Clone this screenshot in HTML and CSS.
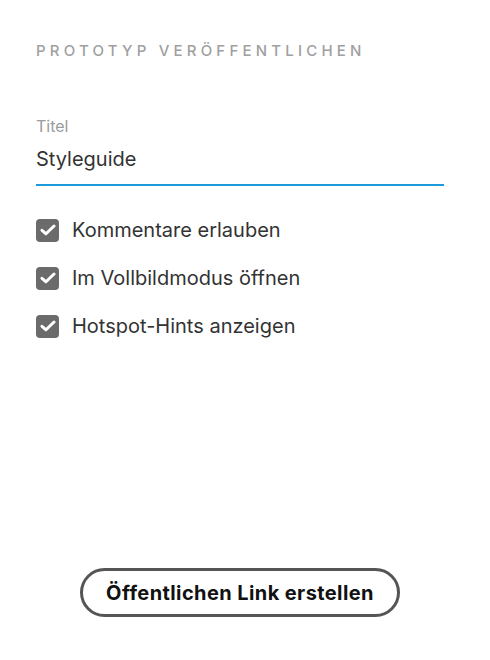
FILE: index.html
```html
<!DOCTYPE html>
<html>
<head>
  <title>Prototyp veröffentlichen</title>
  <link rel="stylesheet" href="styles.css">
</head>
<body>
  <div class="panel">
    <h2 class="panel-title">Prototyp veröffentlichen</h2>

    <div class="field">
      <label class="field-label" for="title">Titel</label>
      <div class="field-value" id="title">Styleguide</div>
    </div>

    <ul class="options">
      <li>
        <span class="check">
          <svg width="16" height="12" viewBox="0 0 16 12"><path d="M2 6.3 L6 9.8 L14 2" fill="none" stroke="#fff" stroke-width="3" stroke-linecap="round" stroke-linejoin="round"/></svg>
        </span>
        Kommentare erlauben
      </li>
      <li>
        <span class="check">
          <svg width="16" height="12" viewBox="0 0 16 12"><path d="M2 6.3 L6 9.8 L14 2" fill="none" stroke="#fff" stroke-width="3" stroke-linecap="round" stroke-linejoin="round"/></svg>
        </span>
        Im Vollbildmodus öffnen
      </li>
      <li>
        <span class="check">
          <svg width="16" height="12" viewBox="0 0 16 12"><path d="M2 6.3 L6 9.8 L14 2" fill="none" stroke="#fff" stroke-width="3" stroke-linecap="round" stroke-linejoin="round"/></svg>
        </span>
        Hotspot-Hints anzeigen
      </li>
    </ul>

    <div class="actions">
      <button class="publish-btn">Öffentlichen Link erstellen</button>
    </div>
  </div>
</body>
</html>
```

FILE: styles.css
```css
/* Global styles */
body {
  font-family: Inter, "Noto Sans", sans-serif;
  margin: 0;
  padding: 0;
  background: #fff;
  color: #333;
}

.panel {
  width: 490px;
  height: 660px;
  box-sizing: border-box;
  padding: 41px 46px 0 36px;
  display: flex;
  flex-direction: column;
}

.panel-title {
  margin: 0;
  font-size: 15px;
  font-weight: 500;
  text-transform: uppercase;
  letter-spacing: 4.2px;
  color: #a0a0a0;
  line-height: 20px;
}

/* Title field */
.field {
  margin-top: 55px;
  border-bottom: 2px solid #1d9bd8;
}

.field-label {
  display: block;
  font-size: 16px;
  color: #9b9b9b;
  line-height: 20px;
}

.field-value {
  font-size: 20px;
  line-height: 24px;
  padding: 11px 0 13px;
  color: #333;
}

/* Checkboxes */
.options {
  list-style: none;
  margin: 32px 0 0;
  padding: 0;
}

.options li {
  display: flex;
  align-items: center;
  gap: 13px;
  height: 24px;
  line-height: 24px;
  margin-bottom: 24px;
  font-size: 20px;
  color: #333;
}

.check {
  width: 23px;
  height: 23px;
  border-radius: 4px;
  background: #6b6b6b;
  display: flex;
  align-items: center;
  justify-content: center;
}

/* Button */
.actions {
  margin-top: auto;
  margin-bottom: 43px;
  display: flex;
  justify-content: center;
}

.publish-btn {
  width: 320px;
  height: 49px;
  border: 3px solid #555;
  border-radius: 25px;
  background: #fff;
  font-family: inherit;
  font-size: 20px;
  font-weight: 700;
  letter-spacing: 0.4px;
  color: #111;
}
```
